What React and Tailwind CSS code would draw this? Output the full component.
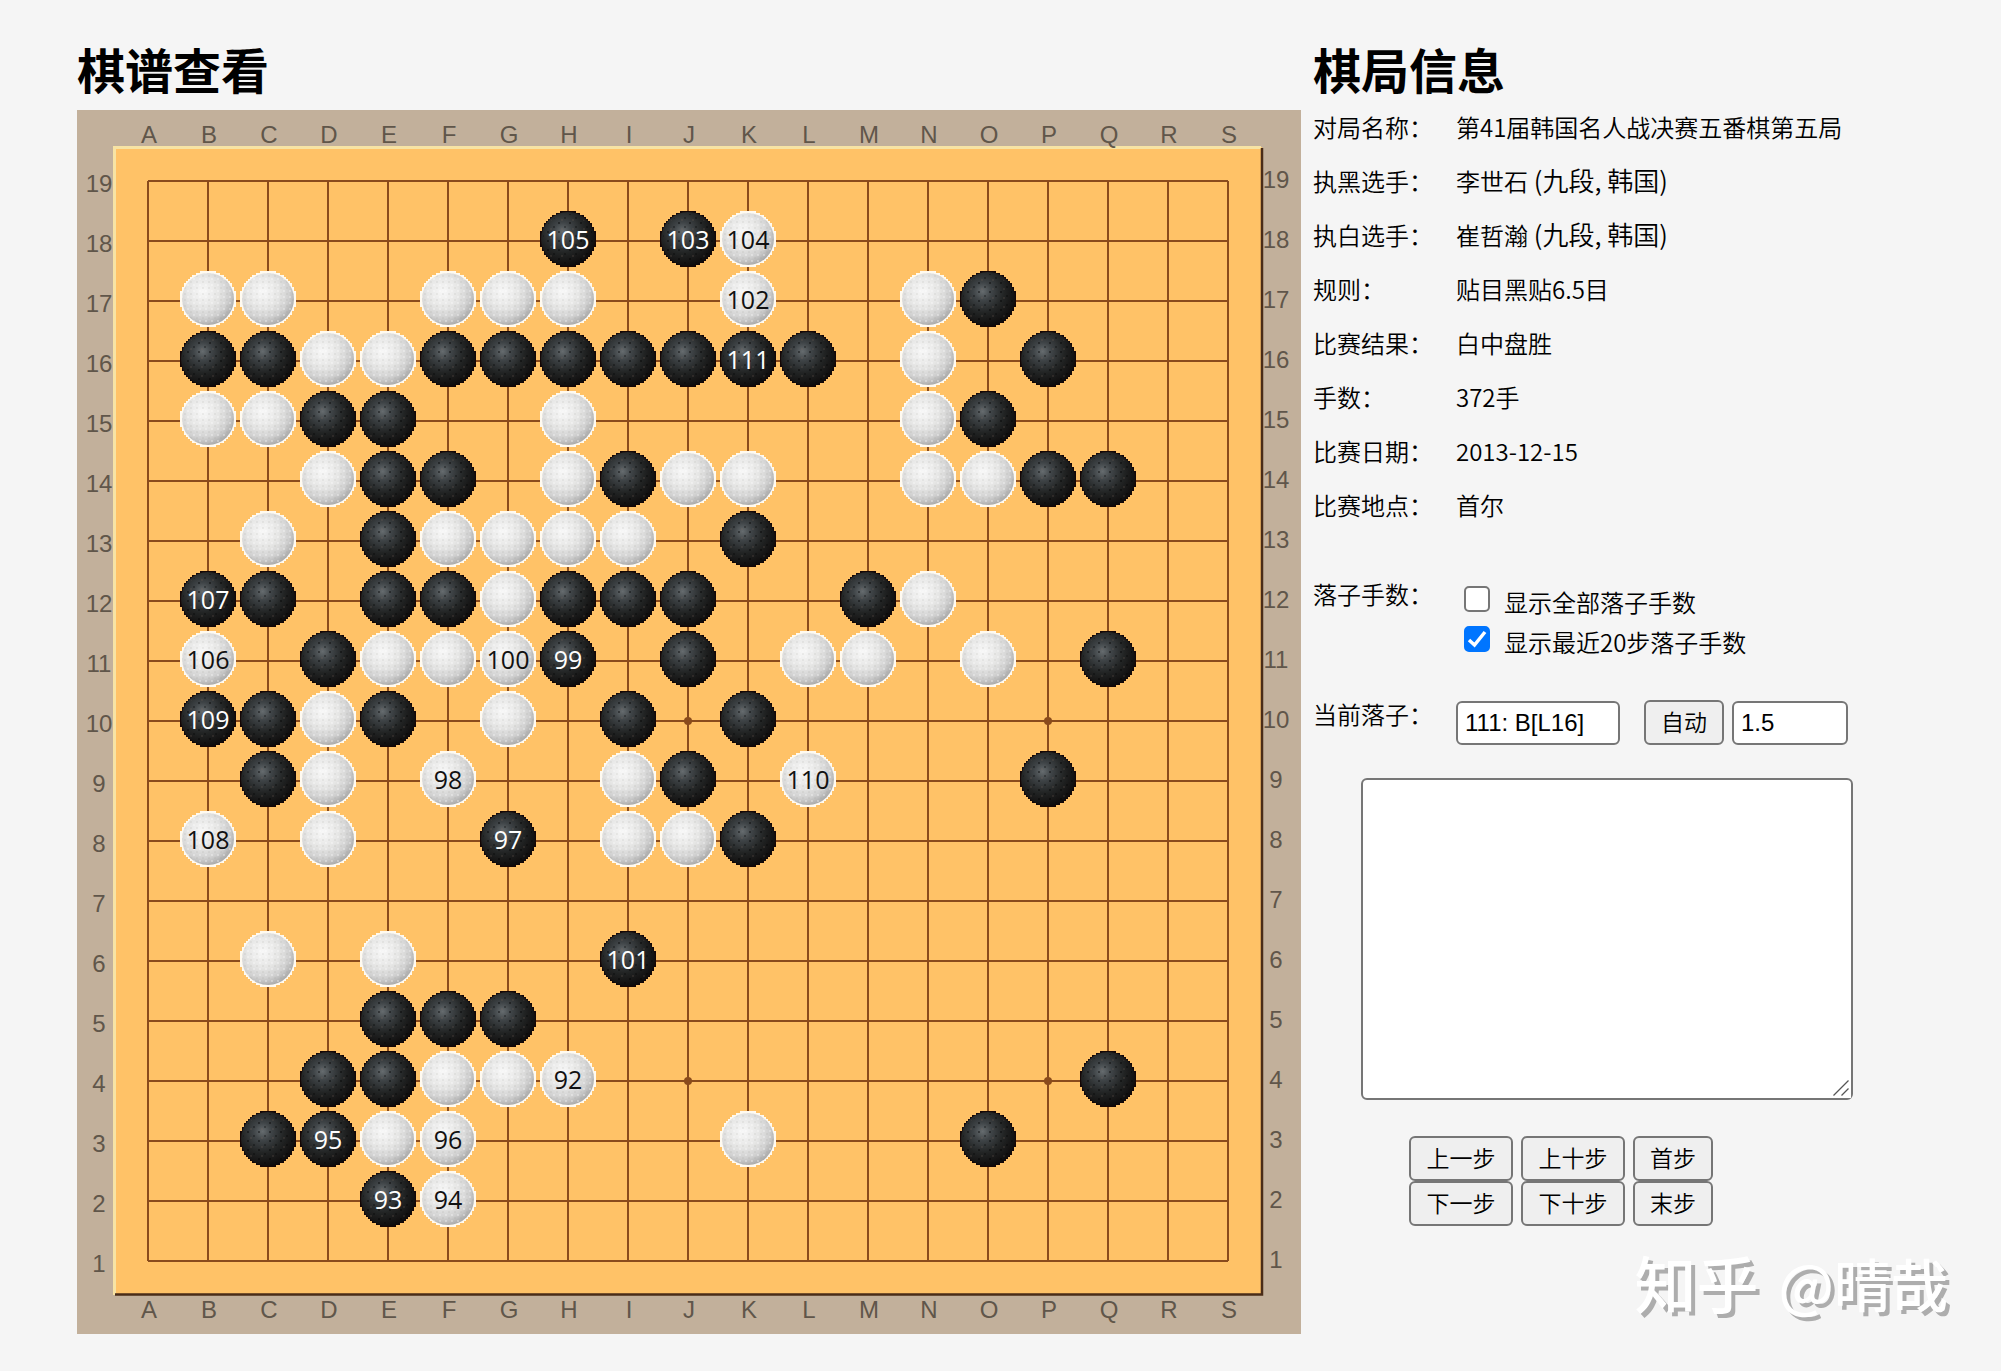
import React, { useState } from 'react';

const COLS = 'ABCDEFGHIJKLMNOPQRS'.split('');
const ROWS = Array.from({ length: 19 }, (_, i) => 19 - i);
const STAR_COLS = [3, 9, 15];
const STAR_ROWS = [16, 10, 4];

// Board geometry, in viewBox units
const START = 71;
const STEP = 60;
const END = START + STEP * 18;

const black = {
  18: 'HJ', 17: 'O', 16: 'BCFGHIJKLP', 15: 'DEO', 14: 'EFIPQ', 13: 'EK',
  12: 'BCEFHIJM', 11: 'DHJQ', 10: 'BCEIK', 9: 'CJP', 8: 'GK', 6: 'I',
  5: 'EFG', 4: 'DEQ', 3: 'CDO', 2: 'E'
};

const white = {
  18: 'K', 17: 'BCFGHKN', 16: 'DEN', 15: 'BCHN', 14: 'DHJKNO', 13: 'CFGHI',
  12: 'GN', 11: 'BEFGLMO', 10: 'DG', 9: 'DFIL', 8: 'BDIJ', 6: 'CE',
  4: 'FGH', 3: 'EFK', 2: 'F'
};

const moves = {
  H4: 92, E2: 93, F2: 94, D3: 95, F3: 96, G8: 97, F9: 98, H11: 99, G11: 100,
  I6: 101, K17: 102, J18: 103, K18: 104, H18: 105, B11: 106, B12: 107,
  B8: 108, B10: 109, L9: 110, K16: 111
};

const colX = (col) => START + COLS.indexOf(col) * STEP;
const rowY = (row) => START + (19 - row) * STEP;

const toStones = (rows, color) =>
  Object.entries(rows).flatMap(([row, cols]) =>
    cols.split('').map((col) => ({ id: `${col}${row}`, x: colX(col), y: rowY(Number(row)) - 2, color }))
  );

const stones = [...toStones(black, 'black'), ...toStones(white, 'white')];

// Stone outline made of square steps
const CELL = 2;
const RADIUS = 14;
const stonePath = () => {
  let d = '';
  for (let i = -RADIUS; i < RADIUS; i++) {
    const half = Math.round(Math.sqrt(RADIUS ** 2 - (i + 0.5) ** 2)) * CELL;
    d += `M${-half} ${i * CELL}H${half}v${CELL + 0.1}H${-half}z`;
  }
  return d;
};
const OUTLINE = stonePath();

const Board = ({ showAll, showRecent }) => (
  <svg viewBox="0 0 1224 1224" className="block w-full" role="img" aria-label="棋盘">
    <defs>
      <radialGradient id="blackStone" cx="0.4" cy="0.36" r="0.66">
        <stop offset="0" stopColor="#666c6f" />
        <stop offset="0.25" stopColor="#3f4447" />
        <stop offset="0.6" stopColor="#222424" />
        <stop offset="1" stopColor="#0e0c0c" />
      </radialGradient>
      <radialGradient id="whiteStone" cx="0.4" cy="0.36" r="0.68">
        <stop offset="0" stopColor="#f8f8f8" />
        <stop offset="0.45" stopColor="#e6e6e5" />
        <stop offset="0.75" stopColor="#d0d0d0" />
        <stop offset="1" stopColor="#a6a6a6" />
      </radialGradient>
      <pattern id="blackGrain" width="11" height="9" patternUnits="userSpaceOnUse">
        <rect x="1" y="1" width="2" height="2" fill="#000" opacity="0.4" />
        <rect x="7" y="5" width="2" height="2" fill="#000" opacity="0.3" />
        <rect x="4" y="7" width="2" height="2" fill="#7b6a60" opacity="0.2" />
      </pattern>
      <pattern id="whiteGrain" width="6" height="6" patternUnits="userSpaceOnUse">
        <rect width="2" height="2" fill="#9a9a90" opacity="0.12" />
        <rect x="3" y="3" width="2" height="2" fill="#fff" opacity="0.3" />
      </pattern>
      <g id="black">
        <path d={OUTLINE} fill="#150706" />
        <circle r="27" fill="url(#blackStone)" />
        <circle r="25" fill="url(#blackGrain)" />
      </g>
      <g id="white">
        <path d={OUTLINE} fill="#fffaf0" />
        <circle r="26" fill="url(#whiteStone)" />
        <circle r="26" fill="url(#whiteGrain)" />
      </g>
    </defs>

    <rect width="1224" height="1224" fill="#c2b09b" />
    <rect x="37" y="37" width="1148" height="1148" fill="#ffc267" />
    <path d="M37.5 1185V37.5H1184" fill="none" stroke="#f7e3a4" strokeWidth="3" />
    <path d="M1185 38V1184.5H38" fill="none" stroke="#4a2c18" strokeWidth="2.5" />

    {/* Grid */}
    <g stroke="#8a4b1c" strokeWidth="2">
      {COLS.map((col) => (
        <line key={col} x1={colX(col)} x2={colX(col)} y1={START} y2={END} />
      ))}
      {ROWS.map((row) => (
        <line key={row} y1={rowY(row)} y2={rowY(row)} x1={START} x2={END} />
      ))}
    </g>
    {STAR_COLS.map((c) =>
      STAR_ROWS.map((r) => (
        <circle key={`${c}-${r}`} cx={START + c * STEP} cy={rowY(r)} r="4" fill="#8a4b1c" />
      ))
    )}

    {/* Coordinates */}
    <g className="font-['Liberation_Sans',sans-serif] text-[24px]" fill="#60564a" textAnchor="middle">
      {COLS.map((col) => (
        <React.Fragment key={col}>
          <text x={colX(col) + 1} y="33">{col}</text>
          <text x={colX(col) + 1} y="1208">{col}</text>
        </React.Fragment>
      ))}
      {ROWS.map((row) => (
        <React.Fragment key={row}>
          <text x="22" y={rowY(row) + 11}>{row}</text>
          <text x="1199" y={rowY(row) + 7}>{row}</text>
        </React.Fragment>
      ))}
    </g>

    {/* Stones */}
    {stones.map((s) => (
      <use key={s.id} href={`#${s.color}`} x={s.x} y={s.y} />
    ))}
    {(showAll || showRecent) && (
      <g className="font-['Open_Sans',sans-serif] text-[25px]" textAnchor="middle">
        {stones.filter((s) => moves[s.id]).map((s) => (
          <text key={s.id} x={s.x} y={s.y + 10} fill={s.color === 'black' ? '#fff' : '#111'}>
            {moves[s.id]}
          </text>
        ))}
      </g>
    )}
  </svg>
);

const info = [
  { label: '对局名称', value: '第41届韩国名人战决赛五番棋第五局' },
  { label: '执黑选手', value: '李世石', extra: '(九段, 韩国)' },
  { label: '执白选手', value: '崔哲瀚', extra: '(九段, 韩国)' },
  { label: '规则', value: '贴目黑贴6.5目' },
  { label: '比赛结果', value: '白中盘胜' },
  { label: '手数', value: '372手' },
  { label: '比赛日期', value: '2013-12-15' },
  { label: '比赛地点', value: '首尔' }
];

const Button = ({ children, className = '' }) => (
  <button
    type="button"
    className={`h-[45px] rounded-md border-2 border-[#767676] bg-[#efefef] pb-1 text-[23px] leading-8 ${className}`}
  >
    {children}
  </button>
);

const Checkbox = ({ label, checked, onChange }) => (
  <label className="flex items-start gap-3.5">
    <span className="mt-1 grid size-[26px]">
      <input
        type="checkbox"
        className="col-start-1 row-start-1 size-[26px] appearance-none rounded-[5px] border-2 border-[#767676] bg-white checked:border-[#0075ff] checked:bg-[#0075ff]"
        checked={checked}
        onChange={(e) => onChange(e.target.checked)}
      />
      {checked && (
        <svg viewBox="0 0 26 26" className="pointer-events-none col-start-1 row-start-1" fill="none" stroke="#fff" strokeWidth="3.5">
          <path d="M5 14L10.5 19L21 6" />
        </svg>
      )}
    </span>
    {label}
  </label>
);

const inputClass =
  "h-11 rounded-md border-2 border-[#767676] bg-white px-[7px] font-['Liberation_Sans',sans-serif] text-2xl font-normal";

const App = () => {
  const [showAll, setShowAll] = useState(false);
  const [showRecent, setShowRecent] = useState(true);
  const [current, setCurrent] = useState('111: B[L16]');
  const [delay, setDelay] = useState('1.5');
  const [comment, setComment] = useState('');

  return (
    <div className="min-h-screen bg-[#f5f5f5] text-black font-['Noto_Sans_CJK_SC',sans-serif]">
      <main className="flex gap-3 pt-9 pl-[77px] pb-9">
        <section className="min-w-0 flex-1 max-w-[1224px]">
          <h1 className="mb-2.5 text-5xl leading-[64px] font-bold">棋谱查看</h1>
          <Board showAll={showAll} showRecent={showRecent} />
        </section>

        <section className="w-[688px] shrink-0">
          <h1 className="mb-[3px] text-5xl leading-[64px] font-bold">棋局信息</h1>

          <dl className="grid grid-cols-[143px_1fr] gap-y-1.5 text-2xl leading-[48px] font-[350]">
            {info.map((item) => (
              <React.Fragment key={item.label}>
                <dt>{item.label}：</dt>
                <dd>
                  {item.value}
                  {item.extra && <span className="text-[26px] leading-8"> {item.extra}</span>}
                </dd>
              </React.Fragment>
            ))}
          </dl>

          <div className="mt-[41px] grid grid-cols-[143px_1fr] text-2xl leading-[48px] font-[350]">
            <span>落子手数：</span>
            <div className="flex flex-col pt-3 pl-2 leading-10">
              <Checkbox label="显示全部落子手数" checked={showAll} onChange={setShowAll} />
              <Checkbox label="显示最近20步落子手数" checked={showRecent} onChange={setShowRecent} />
            </div>
          </div>

          <div className="mt-7 grid grid-cols-[143px_1fr] text-2xl leading-[48px] font-[350]">
            <label htmlFor="current">当前落子：</label>
            <div className="flex items-end pt-2.5">
              <input
                id="current"
                className={`w-[164px] ${inputClass}`}
                value={current}
                onChange={(e) => setCurrent(e.target.value)}
              />
              <Button className="ml-6 w-20">自动</Button>
              <input
                aria-label="自动间隔"
                className={`ml-2 w-[116px] ${inputClass}`}
                value={delay}
                onChange={(e) => setDelay(e.target.value)}
              />
            </div>
          </div>

          <div className="relative mt-[33px] ml-12 w-fit">
            <textarea
              aria-label="棋局解说"
              className="block h-[322px] w-[492px] resize rounded-md border-2 border-[#767676] bg-white p-2 text-2xl [&::-webkit-resizer]:bg-white"
              value={comment}
              onChange={(e) => setComment(e.target.value)}
            />
            <svg
              viewBox="0 0 16 16"
              className="pointer-events-none absolute right-1 bottom-1 size-4"
              stroke="#555"
              strokeWidth="1.3"
            >
              <path d="M0.5 15.5L15.5 0.5M8.5 15.5L15.5 8.5" />
            </svg>
          </div>

          <div className="mt-9 ml-24 grid w-fit grid-cols-[104px_104px_80px] gap-x-2 font-[350]">
            <Button>上一步</Button>
            <Button>上十步</Button>
            <Button>首步</Button>
            <Button>下一步</Button>
            <Button>下十步</Button>
            <Button>末步</Button>
          </div>

          <p className="mt-3 flex items-center justify-end gap-5 pr-[53px] leading-[88px] font-medium text-white [text-shadow:4px_4px_0_#adadad]">
            <span className="text-[62px] leading-[88px]">知乎</span>
            <span className="text-[57px]">@晴哉</span>
          </p>
        </section>
      </main>
    </div>
  );
};

export default App;
